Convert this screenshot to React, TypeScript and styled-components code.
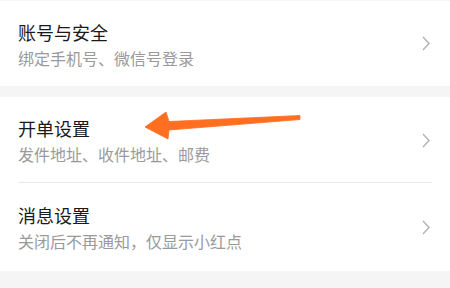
import styled, { createGlobalStyle } from "styled-components";

interface IRow
{
    title: string;
    desc: string;
}

const GlobalStyle = createGlobalStyle`
    html, body {
        margin: 0;
        padding: 0;
        background: #f5f5f5;
        font-family: "Noto Sans CJK SC", "Noto Sans", sans-serif;
    }
`

function Chevron()
{
    return (
        <svg width="8" height="15" viewBox="0 0 8 15">
            <path d="M1 1 L7 7.5 L1 14" fill="none" stroke="#b3b3b3" strokeWidth="1.4" />
        </svg>
    )
}

function SettingRow(props: IRow & { divider?: boolean, height: number })
{
    return (
        <RowWrapper $height={props.height}>
            <RowText>
                <RowTitle>{props.title}</RowTitle>
                <RowDesc>{props.desc}</RowDesc>
            </RowText>
            <Chevron />
            {props.divider && <Divider />}
        </RowWrapper>
    )
}

function App()
{
    return (
        <Page>
            <GlobalStyle />
            <Group>
                <SettingRow height={85} title="账号与安全" desc="绑定手机号、微信号登录" />
            </Group>
            <Group>
                <SettingRow height={86} divider title="开单设置" desc="发件地址、收件地址、邮费" />
                <SettingRow height={88} title="消息设置" desc="关闭后不再通知，仅显示小红点" />
            </Group>
            <ArrowLayer width="450" height="288" viewBox="0 0 450 288">
                <polygon
                    points="145,127 166,112 169,121.5 300,115.5 300,119.5 169,130 168,139"
                    fill="#ff6f1f"
                    stroke="#ff6f1f"
                    strokeWidth="0.8"
                    strokeLinejoin="round"
                />
            </ArrowLayer>
        </Page>
    )
}

const Page = styled.div`
    position: relative;
    width: 450px;
    height: 288px;
    overflow: hidden;
    padding-top: 1px;
    box-sizing: border-box;
    display: flex;
    flex-direction: column;
    gap: 11px;
    background: #f5f5f5;
`
const Group = styled.div`
    background: #ffffff;
    display: flex;
    flex-direction: column;
`
const RowWrapper = styled.div<{ $height: number }>`
    position: relative;
    height: ${p => p.$height}px;
    box-sizing: border-box;
    padding: 0 20px 0 18px;
    display: flex;
    align-items: center;
    justify-content: space-between;
`
const RowText = styled.div`
    display: flex;
    flex-direction: column;
    gap: 4px;
    margin-top: 2px;
`
const RowTitle = styled.div`
    font-size: 18px;
    line-height: 22px;
    color: #1a1a1a;
`
const RowDesc = styled.div`
    font-size: 16px;
    line-height: 22px;
    color: #9a9a9a;
`
const Divider = styled.div`
    position: absolute;
    left: 18px;
    right: 18px;
    bottom: 0;
    height: 1px;
    background: #e8e8e8;
`
const ArrowLayer = styled.svg`
    position: absolute;
    left: 0;
    top: 0;
    pointer-events: none;
`

export default App;
